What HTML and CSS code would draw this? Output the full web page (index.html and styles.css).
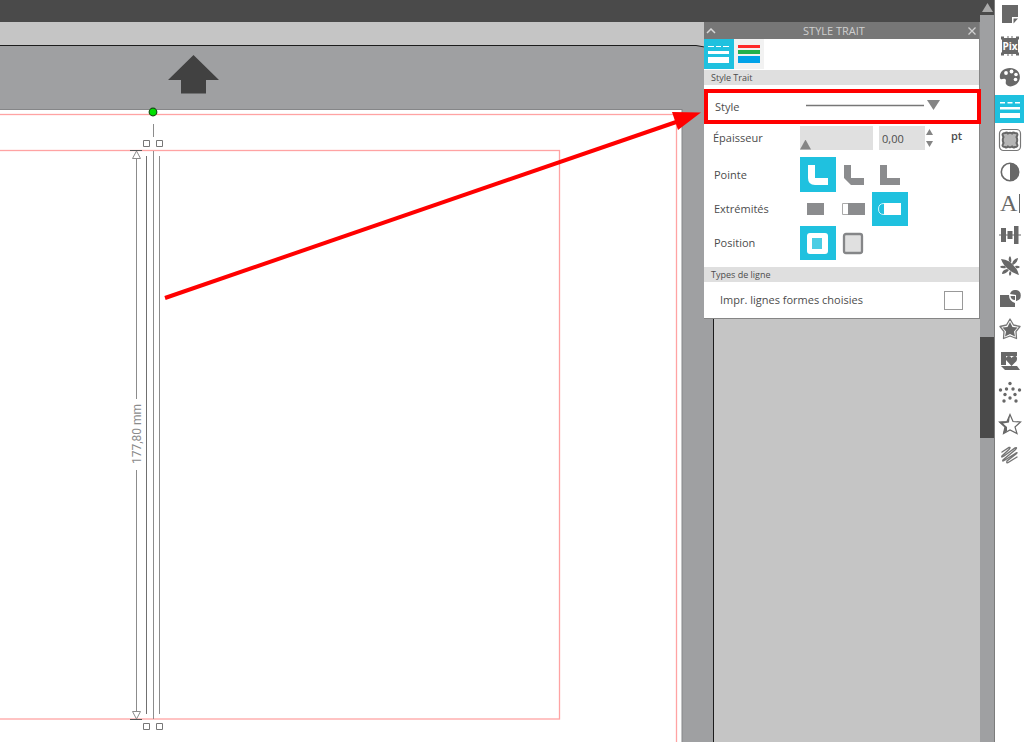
FILE: index.html
```html
<!DOCTYPE html>
<html lang="fr">
<head>
<meta charset="utf-8">
<title>Style Trait</title>
<link rel="stylesheet" href="styles.css">
</head>
<body>
<div class="app">
  <main class="workspace">
    <div class="topbar"></div>
    <div class="canvas">
      <svg class="drawing" aria-label="Zone de dessin">
        <g transform="translate(0 -22)">
          <path d="M-5 45.500H696Q713.500 46 713.500 64V1600H-5Z" fill="#9fa0a2" stroke="#1c1c1c"/>
          <rect x="-5" y="109.500" width="687" height="1500" fill="#fff" stroke="#858688"/>
          <rect x="-5" y="114.500" width="681.500" height="1500" fill="none" stroke="#ffa3a3" stroke-width="1.300"/>
          <rect x="-5" y="150.500" width="564.500" height="568.500" fill="none" stroke="#ffa3a3" stroke-width="1.300"/>
          <path d="M193.500 55L219 80H206V93.500H181V80H168Z" fill="#414141"/>
          <g fill="none" stroke="#8c8c8c">
            <path d="M153.500 124V137M153.500 151V719M159.500 156V714M136.500 158V399M136.500 470V712"/>
            <path d="M146.500 156V714" stroke="#707070"/>
            <path d="M136.500 151L132.500 158.500H140.500ZM136.500 719L132.500 711.500H140.500Z" fill="#fff"/>
            <path d="M130 150.500H142M130 719.500H142" stroke="#555"/>
            <path d="M143.500 140.500h6v6h-6zM156.500 140.500h6v6h-6zM143.500 723.500h6v6h-6zM156.500 723.500h6v6h-6z" fill="#fff" stroke="#777"/>
          </g>
          <circle cx="153" cy="112" r="3.800" fill="#00e000" stroke="#145014" stroke-width="1.200"/>
          <text class="measure" transform="translate(141 434) rotate(-90)" text-anchor="middle">177,80 mm</text>
        </g>
      </svg>
    </div>
    <section class="panel" aria-label="Style Trait">
      <header class="panel-title">
        <button class="plain" aria-label="Réduire"><svg width="10" height="6"><path d="M1 5L5 1L9 5" fill="none" stroke="#d8d8d8" stroke-width="1.500"/></svg></button>
        <h1>STYLE TRAIT</h1>
        <button class="plain" aria-label="Fermer"><svg width="8" height="8"><path d="M.5 .5L7.500 7.500M7.500 .5L.5 7.500" stroke="#d0d0d0" stroke-width="1.300"/></svg></button>
      </header>
      <nav class="tabs">
        <button class="tab active" aria-label="Style"><svg width="22" height="18" fill="#fff"><path d="M0 1h6v1H0zM8 1h5v1H8zM15 1h6v1h-6zM0 6h21v3H0zM0 12h21v6H0z"/></svg></button>
        <button class="tab" aria-label="Couleur"><svg width="22" height="18"><path d="M0 0h22v3H0z" fill="#ff2a2a"/><path d="M0 5h22v4H0z" fill="#22b14c"/><path d="M0 11h22v7H0z" fill="#00a2e8"/></svg></button>
      </nav>
      <h2>Style Trait</h2>
      <div class="row style-row">
        <span class="label">Style</span>
        <button class="style-picker" aria-label="Style de trait"><svg width="136" height="12"><path d="M0 6.500H118" stroke="#777" stroke-width="1.500"/><path d="M121 1H134L127.500 11Z" fill="#858585"/></svg></button>
      </div>
      <div class="row thickness-row">
        <label class="label" for="thickness">Épaisseur</label>
        <div class="slider"><input type="range" min="0" max="10" value="0" aria-label="Épaisseur"></div>
        <input class="number" id="thickness" type="text" value="0,00">
        <div class="spinner">
          <button class="plain" aria-label="Augmenter"><svg width="7" height="6"><path d="M3.500 0L7 6H0Z" fill="#858585"/></svg></button>
          <button class="plain" aria-label="Diminuer"><svg width="7" height="6"><path d="M0 0H7L3.500 6Z" fill="#858585"/></svg></button>
        </div>
        <span class="unit">pt</span>
      </div>
      <div class="row">
        <span class="label">Pointe</span>
        <button class="choice active" aria-label="Arrondie"><svg width="24" height="24"><path d="M2 2H9V15H22V22H9Q2 22 2 15Z" fill="#fff"/></svg></button>
        <button class="choice" aria-label="Biseautée"><svg width="24" height="24"><path d="M2 2H9V15H22V22H9L2 15Z" fill="#8b8c8e"/></svg></button>
        <button class="choice" aria-label="Droite"><svg width="24" height="24"><path d="M2 2H9V15H22V22H2Z" fill="#8b8c8e"/></svg></button>
      </div>
      <div class="row">
        <span class="label">Extrémités</span>
        <button class="choice" aria-label="Plate"><svg width="24" height="24"><path d="M1 6H18V18H1Z" fill="#8b8c8e"/></svg></button>
        <button class="choice" aria-label="Carrée"><svg width="24" height="24"><path d="M.5 6.500H6.500V17.500H.5Z" fill="#fff" stroke="#aaa"/><path d="M6 6H23V18H6Z" fill="#8b8c8e"/></svg></button>
        <button class="choice active" aria-label="Ronde"><svg width="24" height="24"><path d="M6 6.500Q.5 6.500 .5 12T6 17.500" fill="none" stroke="#d5f5fb"/><path d="M6 6H23V18H6Z" fill="#fff"/></svg></button>
      </div>
      <div class="row">
        <span class="label">Position</span>
        <button class="choice active" aria-label="Centre"><svg width="24" height="24"><rect x="1" y="2" width="21" height="21" rx="3" fill="#fff"/><path d="M6 7H16V18H6Z" fill="#4acde4"/></svg></button>
        <button class="choice" aria-label="Extérieur"><svg width="24" height="24"><rect x="2" y="3" width="18" height="19" rx="2" fill="#e0e0e0" stroke="#858688" stroke-width="2.300"/></svg></button>
      </div>
      <h2 class="types">Types de ligne</h2>
      <div class="print-row">
        <label for="print">Impr. lignes formes choisies</label>
        <input id="print" type="checkbox">
      </div>
    </section>
    <svg class="pointer" aria-hidden="true"><path d="M165 298L682 120" stroke="red" stroke-width="4"/><path d="M672 112L701 112.500L678 130Z" fill="red"/></svg>
  </main>
  <div class="scrollbar">
    <button class="scroll-up" aria-label="Défiler vers le haut"><svg width="11" height="9"><path d="M5.500 0L11 9H0Z" fill="#a9a9a9"/></svg></button>
    <div class="thumb"></div>
  </div>
  <nav class="tools">
    <button aria-label="Page"><svg viewBox="0 0 24 24"><path d="M4 3H20V15H14V21H4Z"/><path d="M15.500 16.500H20L15.500 21.500Z"/></svg></button>
    <button aria-label="PixScan"><svg viewBox="0 0 24 24"><path d="M4 4H20V20H4Z"/><path d="M3 2.500h3v3H3zM9 2.500h2v1H9zM13 2.500h2v1h-2zM18 2.500h3v3h-3zM3 18.500h3v3H3zM9 20.500h2v1H9zM13 20.500h2v1h-2zM18 18.500h3v3h-3z"/><text class="pix" x="12" y="16" text-anchor="middle">Pix</text></svg></button>
    <button aria-label="Remplissage"><svg viewBox="0 0 24 24"><path d="M12 3C5 3 1 8 2 13C3 16 5 13 7 14C9 15 7 17 8 19C10 23 18 22 21 16C24 9 19 3 12 3Z"/><g fill="#fff"><circle cx="8" cy="8" r="1.900"/><circle cx="13.500" cy="6.500" r="1.900"/><circle cx="18" cy="9.500" r="1.800"/><circle cx="17.500" cy="14.500" r="1.800"/></g></svg></button>
    <button class="active" aria-label="Style de trait"><svg viewBox="0 0 24 24"><g fill="#fff"><path d="M2 5h5v1.500H2zM9.500 5h5v1.500h-5zM17 5h5v1.500h-5zM2 10h20v2.500H2zM2 16h20v5H2z"/></g></svg></button>
    <button aria-label="Tracer"><svg viewBox="0 0 24 24"><rect x="1.500" y="1.500" width="21" height="21" rx="4" fill="#fff" stroke="#777" stroke-width="1.200"/><path d="M5.500 9Q3 5 7 5Q9 4 10 5.500Q12 4 14 5.500Q15 4 17 5Q21 5 18.500 9Q20 12 18.500 15Q21 19 17 19Q15 20 14 18.500Q12 20 10 18.500Q9 20 7 19Q3 19 5.500 15Q4 12 5.500 9Z" fill="#b5b5b5" stroke="#686868" stroke-width="2"/></svg></button>
    <button aria-label="Ajustement d'image"><svg viewBox="0 0 24 24"><circle cx="12" cy="12" r="8.700" fill="#fff" stroke="#686868" stroke-width="1.600"/><path d="M12 3A9 9 0 0 1 12 21Z"/></svg></button>
    <button aria-label="Texte"><svg viewBox="0 0 24 24"><text class="letter" x="2" y="20">A</text><path d="M21 3H22V22H21Z"/></svg></button>
    <button aria-label="Transformer"><svg viewBox="0 0 24 24"><path d="M1 11.500H23V12.500H1ZM3 5H8V19H3ZM9.500 8H14.500V16H9.500ZM16 3H20.500V21H16Z"/></svg></button>
    <button aria-label="Dupliquer"><svg viewBox="0 0 24 24"><path d="M3 5Q12 6 16 12Q20 16 21 21Q14 19 10 15Q5 11 3 5Z"/><path d="M11 7Q10 4 12 2Q14 4 13 9ZM14 10Q15 5 20 4Q20 8 15 11ZM17 12Q20 11 22 13Q20 15 18 14ZM7 12Q3 11 2 13Q4 15 8 14ZM9 15Q4 16 4 20Q8 20 11 16ZM12 17Q10 20 12 22Q14 20 13 18Z"/></svg></button>
    <button aria-label="Modifier"><svg viewBox="0 0 24 24"><path d="M2 9H11Q11 15 17 17V21H2Z"/><path d="M12 8A5.500 5.500 0 1 1 18 15V9Z"/><path d="M12.500 10H17V14Q13 14 12.500 10Z"/></svg></button>
    <button aria-label="Décalage"><svg viewBox="0 0 24 24"><path d="M12 2L15.500 8L22 9.500L18 14.500L18.500 21.500L12 19L5.500 21.500L6 14.500L2 9.500L8.500 8Z" fill="#fff" stroke="#777" stroke-width="1.300" stroke-linejoin="round"/><path d="M12 5L14.500 10L19.500 10.500L16 14.500L17 19.500L12 17L7 19.500L8 14.500L4.500 10.500L9.500 10Z"/></svg></button>
    <button aria-label="Bibliothèque"><svg viewBox="0 0 24 24"><path d="M3 3H19V7H8V16H3ZM3 17H19L22 21H7Z"/><path d="M8 7H19V17H8Z" fill="#fff"/><path d="M13.500 17L8 11Q7.500 7 11 7Q13 7 13.500 9Q15 6.500 17.500 7Q20 8 18.500 12Z"/></svg></button>
    <button aria-label="Pointillés"><svg viewBox="0 0 24 24"><circle cx="12" cy="3.500" r="1.700"/><circle cx="2.500" cy="10" r="1.700"/><circle cx="8.500" cy="9" r="1.700"/><circle cx="15" cy="9" r="1.700"/><circle cx="21.500" cy="10" r="1.700"/><circle cx="7" cy="14.500" r="1.700"/><circle cx="17" cy="14.500" r="1.700"/><circle cx="12" cy="18" r="1.700"/><circle cx="6" cy="21" r="1.700"/><circle cx="18" cy="21" r="1.700"/></svg></button>
    <button aria-label="Étoile"><svg viewBox="0 0 24 24"><path d="M12 2.500L15 9.500L22.500 10L17 15L19 21.500L12 18L5.500 21.500L7 15L1.500 10L9 9.500Z" fill="#fff" stroke="#686868" stroke-width="1.200"/><path d="M12 2L9 9.500L1 10L7 15L5 22L9 19L9 15L5 11.500L11 10.500Z"/></svg></button>
    <button aria-label="Croquis"><svg viewBox="0 0 24 24"><path d="M4 9L11 4.500Q13 4 11 6.500L4 13Q3 15 6 13L17 5Q20 4 17 7L5 17Q4 19 7 17L18 10Q20 9 18 11L9 18Q8 21 11 19L19 14" fill="none" stroke="#747474" stroke-width="1.400" stroke-linecap="round"/></svg></button>
  </nav>
</div>
</body>
</html>
```
FILE: styles.css
```css
* { box-sizing: border-box; }
body { margin: 0; font: 11px/16px "Open Sans", "Noto Sans", sans-serif; color: #4c4c4c; }
button { padding: 0; border: 0; background: none; font: inherit; display: flex; align-items: center; justify-content: center; }
svg { display: block; flex: none; }
.app { display: flex; height: 100vh; overflow: hidden; }
.workspace { position: relative; flex: 1; min-width: 0; display: flex; flex-direction: column; }
.topbar { height: 22px; background: #4a4a4a; }
.canvas { flex: 1; min-height: 0; background: #c5c5c5; }
.drawing { width: 100%; height: 100%; }
.measure { font: 12px Roboto, sans-serif; fill: #8b8b8b; }
.pointer { position: absolute; inset: 0; width: 100%; height: 100%; pointer-events: none; }

.panel { position: absolute; top: 22px; right: 0; width: 276px; background: #fff; border: 1px solid #858585; border-width: 0 1px 1px 0; }
.panel-title { display: flex; align-items: center; height: 17px; padding: 0 3px 0 2px; background: #777; color: #cfcfcf; }
h1 { flex: 1; margin: 0; padding-right: 16px; font-size: 11px; line-height: 16px; font-weight: 400; text-align: center; }
.tabs { display: flex; height: 31px; }
.tab { width: 30px; height: 30px; background: #f2f2f2; }
.tab.active, .choice.active { background: #1fc1df; }
h2 { margin: 0; height: 15px; padding-left: 7px; background: #dfdfdf; font-size: 9px; line-height: 16px; font-weight: 400; }
.row { display: flex; align-items: center; padding-left: 10px; }
.label { width: 86px; }
.style-row { height: 35px; margin: 4px -2px 0 0; padding-left: 7px; border: 4px solid #f00; }
.style-picker { margin-left: 5px; padding-bottom: 4px; }
.thickness-row { height: 33px; padding: 0 0 6px 9px; }
.slider { width: 73px; height: 24px; margin-left: 1px; display: flex; align-items: flex-end; background: #e0e0e0; }
.slider input { appearance: none; width: 100%; height: 10px; margin: 0; background: none; }
.slider input::-webkit-slider-thumb { appearance: none; width: 11px; height: 10px; background: #858585; clip-path: polygon(50% 0, 100% 100%, 0 100%); }
.number { width: 46px; height: 24px; margin-left: 6px; padding: 2px 3px 0; border: 0; background: #e0e0e0; font: inherit; color: inherit; }
.spinner { display: flex; flex-direction: column; gap: 6px; margin-left: 1px; }
.unit { margin-left: 18px; padding-bottom: 4px; font-weight: 600; }
.choice { width: 36px; height: 34px; }
.thickness-row + .row .choice { height: 35px; }
.types { margin-top: 7px; }
.print-row { display: flex; align-items: center; justify-content: space-between; height: 36px; padding: 0 16px; }
.print-row input { appearance: none; width: 19px; height: 19px; margin: 0; border: 1px solid #999; background: #fff; }

.scrollbar { width: 15px; background: #9fa0a2; border-right: 1px solid #7c7c7c; display: flex; flex-direction: column; }
.scroll-up { height: 15px; background: #4a4a4a; }
.thumb { height: 101px; margin-top: 322px; background: #4a4a4a; }
.tools { width: 29px; height: 469px; display: flex; flex-direction: column; justify-content: space-between; }
.tools button { width: 29px; height: 28px; }
.tools button.active { background: #1fc1df; }
.tools svg { width: 24px; height: 24px; fill: #686868; }
.pix { font: 700 10px "Open Sans", sans-serif; fill: #fff; }
.letter { font: 24px "Liberation Serif", serif; }
```
